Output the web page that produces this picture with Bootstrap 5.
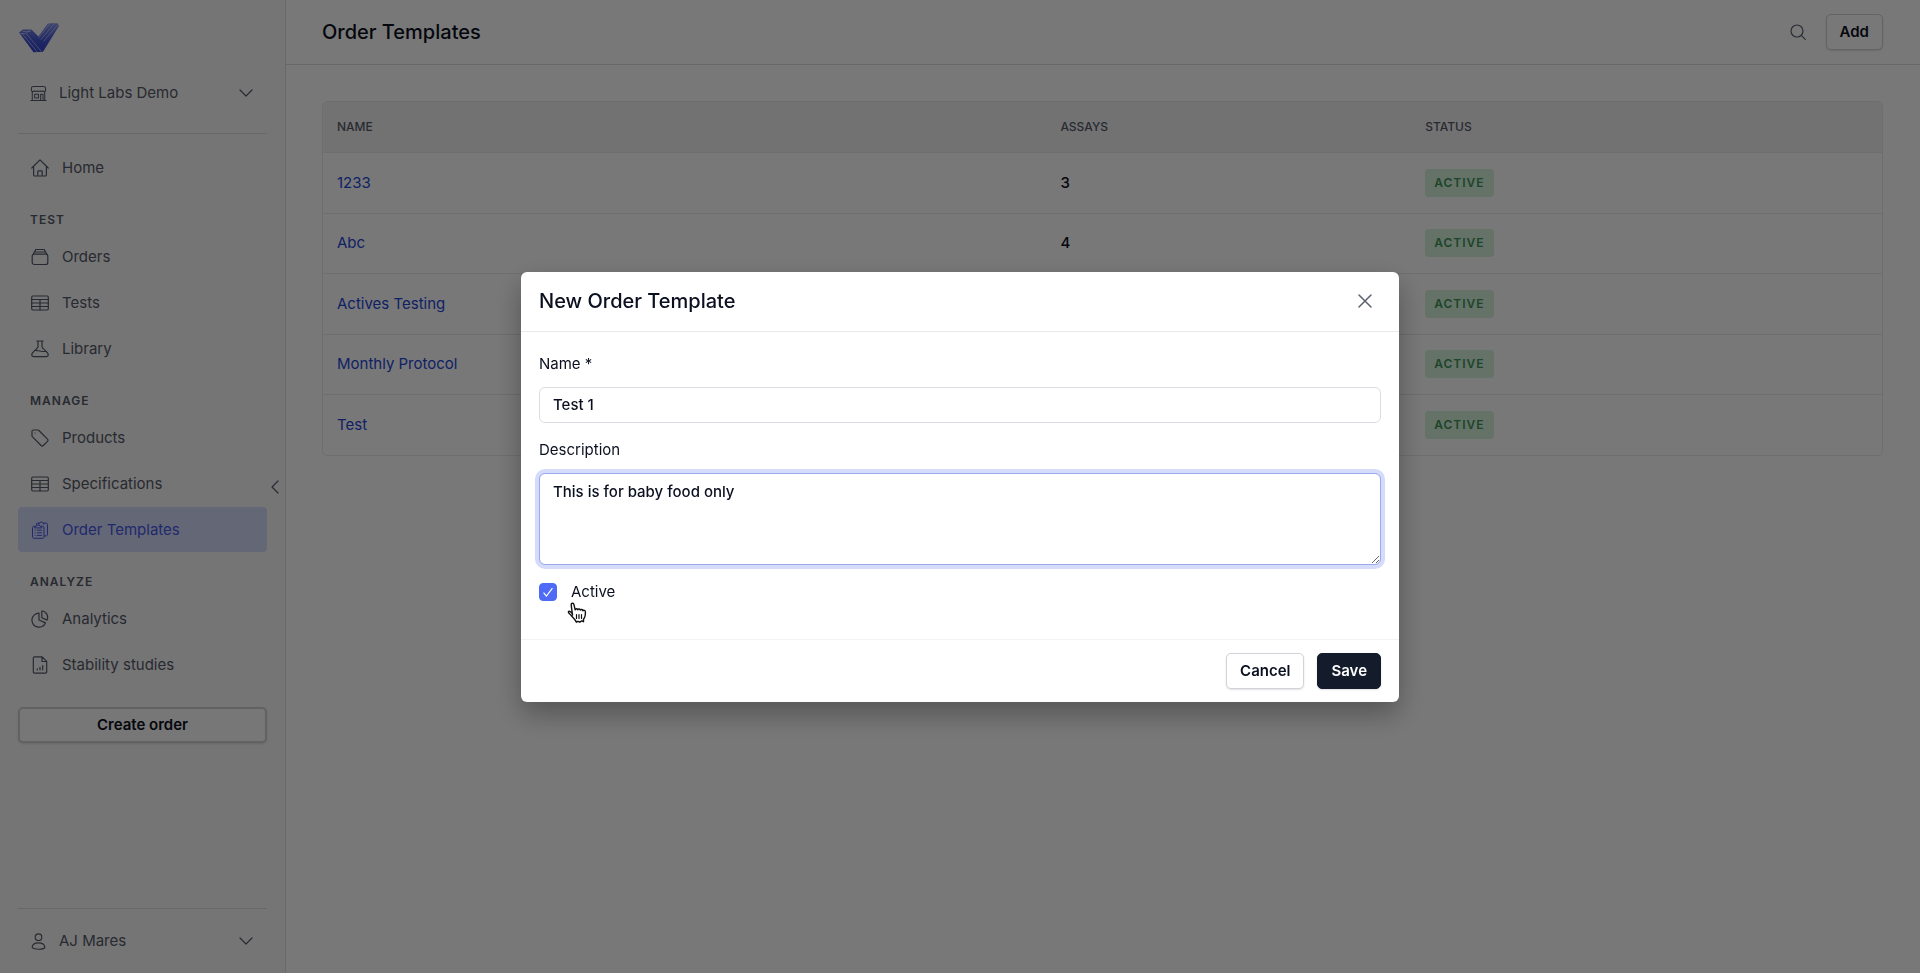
<!DOCTYPE html>
<html lang="en">
<head>
<meta charset="utf-8">
<meta name="viewport" content="width=device-width, initial-scale=1">
<title>Order Templates</title>
<link href="https://cdn.jsdelivr.net/npm/bootstrap@5.3.0/dist/css/bootstrap.min.css" rel="stylesheet">
<style>
  :root {
    --ink: #0b1020;
    --slate: #565a68;
    --line: #e9e9ed;
    --brand: #4f6bf5;
  }
  body {
    font-family: Inter, "Liberation Sans", sans-serif;
    font-size: 15px;
    line-height: 24px;
    color: var(--ink);
    background: #fff;
  }
  svg { display: block; flex: none; fill: none; stroke: currentColor; stroke-width: 1.2; stroke-linecap: round; stroke-linejoin: round; }

  .app-side { width: 286px; background: #f8f8f9; border-right: 1px solid #dfe0e4; color: var(--slate); padding: 22px 18px 0; }
  .app-side hr { margin: 0; border-color: #dddee2; opacity: 1; }
  .side-switch { height: 64px; padding: 0 14px 0 12px; gap: 12px; border: 0; background: none; color: inherit; text-align: left; }
  .side-nav { padding-top: 11px; }
  .side-nav a { display: flex; align-items: center; gap: 13px; height: 45px; margin-bottom: 1px; padding: 0 13px; border-radius: 4px; color: inherit; text-decoration: none; }
  .side-nav a.active { background: #d5dafa; color: #4658e8; }
  .side-title { height: 43px; padding: 17px 12px 0; margin: 0; font-size: 12px; font-weight: 600; line-height: 24px; letter-spacing: 1px; }
  .side-fold { right: 4px; top: 478px; width: 12px; height: 18px; padding: 0; border: 0; background: none; color: inherit; }

  .btn-app { height: 36px; padding: 0 13px; font-size: 15px; font-weight: 600; line-height: 22px; color: var(--ink); background: #fff; border: 1px solid #d2d3d8; border-radius: 5px; box-shadow: 0 1px 2px rgba(0,0,0,.12); }
  .btn-solid { color: #fff; background: #141b2b; border-color: #141b2b; }
  .app-side .btn-app { margin-top: 19px; border-color: #d0d1d6; border-width: 2px; background: #fcfcfc; }

  .app-top { height: 65px; padding: 0 37px 0 36px; border-bottom: 1px solid #dcdde1; }
  .app-heading { font-size: 20px; font-weight: 500; line-height: 28px; }
  .app-body { padding: 36px 37px 0 36px; }
  .grid-box { border: 1px solid var(--line); border-radius: 5px; overflow: hidden; }
  .grid-box table { table-layout: fixed; margin: 0; color: var(--ink); }
  .grid-box th, .grid-box td { padding: 0 14px; vertical-align: middle; border-color: var(--line); }
  .grid-box th { height: 50px; background: #f2f2f4; color: var(--slate); font-size: 12px; font-weight: 500; }
  .grid-box td { height: 61px; background: transparent; font-weight: 500; }
  .grid-box tr:nth-child(even) td { height: 60px; }
  .grid-box tr:last-child td { border-bottom: 0; }
  .grid-box a { color: #2547d6; text-decoration: none; font-weight: 400; }
  .col-title { width: 46.4%; }
  .col-count { width: 23.4%; }
  .pill { display: inline-block; padding: 0 9px; border-radius: 4px; background: #d6f3de; color: #3f935a; font-size: 12px; font-weight: 600; line-height: 28px; letter-spacing: 1px; vertical-align: middle; }

  .modal-backdrop.show { opacity: .53; }
  .modal-dialog { max-width: 878px; }
  .modal-content { border: 0; border-radius: 6px; color: var(--ink); box-shadow: 0 12px 28px rgba(0,0,0,.3); }
  .modal-header { height: 60px; padding: 0 26px 0 18px; border-color: var(--line); }
  .modal-body { padding: 20px 18px 35px; }
  .modal-footer { padding: 13px 18px; gap: 13px; border-color: #f3f3f5; }
  .modal-footer > * { margin: 0; }
  .modal .form-label { margin: 0 0 11px; }
  .modal .form-control { margin-bottom: 15px; padding: 5px 13px; font-size: 15px; font-weight: 500; line-height: 24px; color: var(--ink); border-color: #dcdde2; border-radius: 6px; }
  .modal .form-control.is-focus { height: 92px; padding: 6px 13px; border-color: #9ba8ea; box-shadow: 0 0 0 4px #d5dcfb; }
  .modal .form-check { min-height: 24px; padding: 0; gap: 14px; }
  .modal .form-check-input { width: 18px; height: 18px; margin: 0; float: none; border-radius: 4px; background-color: var(--brand); border-color: var(--brand); background-image: url("data:image/svg+xml,%3csvg xmlns='http://www.w3.org/2000/svg' viewBox='0 0 18 18'%3e%3cpath fill='none' stroke='%23fff' stroke-width='1.3' d='M4 9.8l3.200 3.800 6.800-9'/%3e%3c/svg%3e"); }
  .plain-btn { padding: 0; border: 0; background: none; color: #5b6073; }
  .hand { left: 28px; top: 22px; fill: #fff; stroke: #111; }
</style>
</head>
<body>
<svg width="0" height="0" class="position-absolute" aria-hidden="true">
  <symbol id="i-store" viewBox="0 0 18 18"><path d="M1.500 6V3.500c0-1.200.8-2 2-2h11c1.200 0 2 .8 2 2V6c-.3 1.300-2.300 1.300-2.900.2-.5 1-2.500 1-3 0-.6 1-2.600 1-3.200 0-.5 1-2.500 1-3 0-.6 1.100-2.600 1.100-2.900-.2zM2.400 7.500V16M15.600 7.500V16M1 16.500h16M5 9.800h4v4H5zM11.300 16.400V9.800h2.500v6.600" stroke-width="1.100"/></symbol>
  <symbol id="i-home" viewBox="0 0 18 18"><path d="M.8 9 9 .9 17.200 9M2.600 7.500V16c0 .6.400 1 1 1h10.800c.6 0 1-.4 1-1V7.500M6.800 17v-4.500c0-.4.300-.7.700-.7h3c.4 0 .7.300.7.700V17"/></symbol>
  <symbol id="i-box" viewBox="0 0 18 18"><rect x="1.200" y="6.200" width="15.600" height="10.300" rx="2"/><path d="M2.400 6.200 3.200 4h11.600l.8 2.200M3.700 4l1-2.500h8.600l1 2.500"/></symbol>
  <symbol id="i-table" viewBox="0 0 18 18"><rect x=".7" y="2" width="16.600" height="14" rx="1.200"/><path d="M.7 5.500h16.600M.7 9h16.600M.7 12.500h16.600M9 5.500V16"/></symbol>
  <symbol id="i-flask" viewBox="0 0 18 18"><path d="M5.800 1h6.400M7 1v5.800c0 1.500-5 4.500-6 7-.6 1.600.3 2.900 2 2.900h12c1.700 0 2.600-1.300 2-2.900-1-2.500-6-5.500-6-7V1M3.500 10.500c3-1 4.500 1.800 11.500.8"/></symbol>
  <symbol id="i-tag" viewBox="0 0 18 18"><path d="M1 2.500C1 1.600 1.600 1 2.500 1h4.200c.5 0 .9.200 1.200.5l8.600 8.600c.7.700.7 1.500 0 2.200l-4.200 4.200c-.7.700-1.500.7-2.200 0L1.500 7.900C1.200 7.600 1 7.200 1 6.700z"/><path d="M4 4h.1"/></symbol>
  <symbol id="i-clip" viewBox="0 0 18 18"><path stroke-width="1" d="M5.500 3.500V3c0-.5.400-.9 1-.9h1.400M12.800 2.100H15c.9 0 1.500.6 1.500 1.500v9.900c0 .8-.6 1.400-1.500 1.400h-1.600M7.900 3.300V2.100h1.200c.2-1.700 2.300-1.700 2.600 0h1.100v1.200M3.700 5.300H3c-.9 0-1.500.6-1.500 1.500v9c0 .9.600 1.500 1.500 1.500h8.500c.9 0 1.500-.6 1.500-1.500v-9c0-.9-.6-1.500-1.500-1.500h-.8M3.800 6.500V5.200h1.700c.2-1.700 3.200-1.700 3.400 0h1.800v1.300zM4 9.200h.1M6.200 9.200h4.300M4 11.800h.1M6.200 11.800h4.300M4 14.400h.1M6.200 14.400h4.300"/></symbol>
  <symbol id="i-pie" viewBox="0 0 18 18"><path d="M8 3.200a7 7 0 1 0 6.400 9.700L8 10zM10.800 1v6.700l5.300 2.400C17.700 6 15.500 1.400 10.800 1z"/></symbol>
  <symbol id="i-doc" viewBox="0 0 18 18"><path d="M2.300 2c0-.7.500-1.200 1.200-1.200h7.700l4.500 4.500V16c0 .7-.5 1.200-1.200 1.200h-11c-.7 0-1.200-.5-1.200-1.200zM11 1v4.500h4.600M6.300 13.800v-.9M9 13.800v-2.500M11.700 13.800V9.600"/></symbol>
  <symbol id="i-user" viewBox="0 0 18 18"><circle cx="9" cy="4.400" r="3.500"/><path d="M2.300 15c.7-6 12.700-6 13.400 0 0 .9-2.500 2.200-6.700 2.200S2.300 15.900 2.300 15z"/></symbol>
  <symbol id="i-down" viewBox="0 0 14 14"><path d="m1 4 6 6 6-6"/></symbol>
</svg>

<div class="d-flex min-vh-100">
  <aside class="app-side position-relative d-flex flex-column flex-shrink-0">
    <a href="#" aria-label="Light Labs" class="d-block">
      <svg width="42" height="31" viewBox="0 0 42 31">
        <defs><linearGradient id="lg" x1="0" y1="0" x2="0" y2="1"><stop offset="0" stop-color="#8794ea"/><stop offset=".6" stop-color="#4455d4"/><stop offset="1" stop-color="#3342c8"/></linearGradient></defs>
        <path d="M1 10.500 5 7.500h8.500l7 7 9-12.500 2-.8h8l1.500 2.800L25 29.800l-9.500.4z" fill="url(#lg)" stroke="none"/>
        <path d="M1.500 11.500h6l5-3.500M4 11.500l15 18M8 11.500l15 17.500M5 9.500h7M21 15.500 32 1.500M23 17.500 36.500 1.500M26 19 39 3.500" stroke="#c8cdf8" stroke-width=".7"/>
      </svg>
    </a>
    <button type="button" class="side-switch d-flex align-items-center mt-2">
      <svg width="17" height="17"><use href="#i-store"/></svg><span class="flex-grow-1">Light Labs Demo</span><svg width="14" height="14"><use href="#i-down"/></svg>
    </button>
    <hr class="mt-2">
    <nav class="side-nav d-flex flex-column">
      <a href="#"><svg width="18" height="18"><use href="#i-home"/></svg>Home</a>
      <h2 class="side-title">TEST</h2>
      <a href="#"><svg width="18" height="18"><use href="#i-box"/></svg>Orders</a>
      <a href="#"><svg width="18" height="18"><use href="#i-table"/></svg>Tests</a>
      <a href="#"><svg width="18" height="18"><use href="#i-flask"/></svg>Library</a>
      <h2 class="side-title">MANAGE</h2>
      <a href="#"><svg width="18" height="18"><use href="#i-tag"/></svg>Products</a>
      <a href="#"><svg width="18" height="18"><use href="#i-table"/></svg>Specifications</a>
      <a href="#" class="active" aria-current="page"><svg width="18" height="18"><use href="#i-clip"/></svg>Order Templates</a>
      <h2 class="side-title">ANALYZE</h2>
      <a href="#"><svg width="18" height="18"><use href="#i-pie"/></svg>Analytics</a>
      <a href="#"><svg width="18" height="18"><use href="#i-doc"/></svg>Stability studies</a>
    </nav>
    <button type="button" class="btn btn-app">Create order</button>
    <hr class="mt-auto">
    <button type="button" class="side-switch d-flex align-items-center">
      <svg width="17" height="17"><use href="#i-user"/></svg><span class="flex-grow-1">AJ Mares</span><svg width="14" height="14"><use href="#i-down"/></svg>
    </button>
    <button type="button" class="side-fold position-absolute" aria-label="Collapse sidebar"><svg width="12" height="18" viewBox="0 0 12 18"><path d="M9 3 3 9l6 6"/></svg></button>
  </aside>

  <main class="flex-grow-1">
    <header class="app-top d-flex align-items-center justify-content-between">
      <h1 class="app-heading m-0">Order Templates</h1>
      <div class="d-flex align-items-center gap-3">
        <button type="button" class="plain-btn me-1" aria-label="Search"><svg width="16" height="16" viewBox="0 0 16 16"><circle cx="7" cy="7" r="6"/><path d="m11.300 11.300 4 4"/></svg></button>
        <button type="button" class="btn btn-app">Add</button>
      </div>
    </header>
    <div class="app-body">
      <div class="grid-box">
        <table class="table">
          <thead><tr><th class="col-title" scope="col">NAME</th><th class="col-count" scope="col">ASSAYS</th><th scope="col">STATUS</th></tr></thead>
          <tbody>
            <tr><td><a href="#">1233</a></td><td>3</td><td><span class="pill">ACTIVE</span></td></tr>
            <tr><td><a href="#">Abc</a></td><td>4</td><td><span class="pill">ACTIVE</span></td></tr>
            <tr><td><a href="#">Actives Testing</a></td><td></td><td><span class="pill">ACTIVE</span></td></tr>
            <tr><td><a href="#">Monthly Protocol</a></td><td></td><td><span class="pill">ACTIVE</span></td></tr>
            <tr><td><a href="#">Test</a></td><td></td><td><span class="pill">ACTIVE</span></td></tr>
          </tbody>
        </table>
      </div>
    </div>
  </main>
</div>

<div class="modal-backdrop show"></div>
<div class="modal show d-block" role="dialog" aria-modal="true" aria-labelledby="dlg-title">
  <div class="modal-dialog modal-dialog-centered">
    <form class="modal-content">
      <div class="modal-header">
        <h2 class="app-heading m-0" id="dlg-title">New Order Template</h2>
        <button type="button" class="plain-btn" aria-label="Close"><svg width="16" height="16" viewBox="0 0 16 16"><path d="m2 2 12 12M14 2 2 14" stroke-width="1.500"/></svg></button>
      </div>
      <div class="modal-body">
        <label class="form-label d-block" for="f-name">Name *</label>
        <input class="form-control" id="f-name" type="text" value="Test 1" required>
        <label class="form-label d-block" for="f-desc">Description</label>
        <textarea class="form-control is-focus" id="f-desc">This is for baby food only</textarea>
        <div class="form-check position-relative d-flex align-items-center mb-0">
          <input class="form-check-input" type="checkbox" id="f-active" checked>
          <label class="form-check-label" for="f-active">Active</label>
          <svg class="hand position-absolute" width="20" height="22" viewBox="0 0 20 22" aria-hidden="true"><path stroke-width="1.400" d="M5.500 13 4.200 3.200C4 .6 6.600.6 7 2.800l1.200 5c.4-1.500 2.300-1.300 2.600 0 .5-1.200 2.300-1 2.600.3.700-1 2.300-.7 2.500.6.800-.8 2.400-.4 2.500 1 .1 3 .2 5.300-1.900 7.500v2.500l-1.700-.8-2 1.300-1.800-.9-1.600.9c-.8-2.700-3.200-4.400-5-6.500-1.400-1.800-3.600-2.500-3-3.900.7-1.300 2.600-.2 4.100 2.200z"/><path d="M9.500 12.500v4M12 12.500v4M14.500 12.500v4"/></svg>
        </div>
      </div>
      <div class="modal-footer">
        <button type="button" class="btn btn-app">Cancel</button>
        <button type="submit" class="btn btn-app btn-solid">Save</button>
      </div>
    </form>
  </div>
</div>
<script src="https://cdn.jsdelivr.net/npm/bootstrap@5.3.0/dist/js/bootstrap.bundle.min.js"></script>
</body>
</html>
